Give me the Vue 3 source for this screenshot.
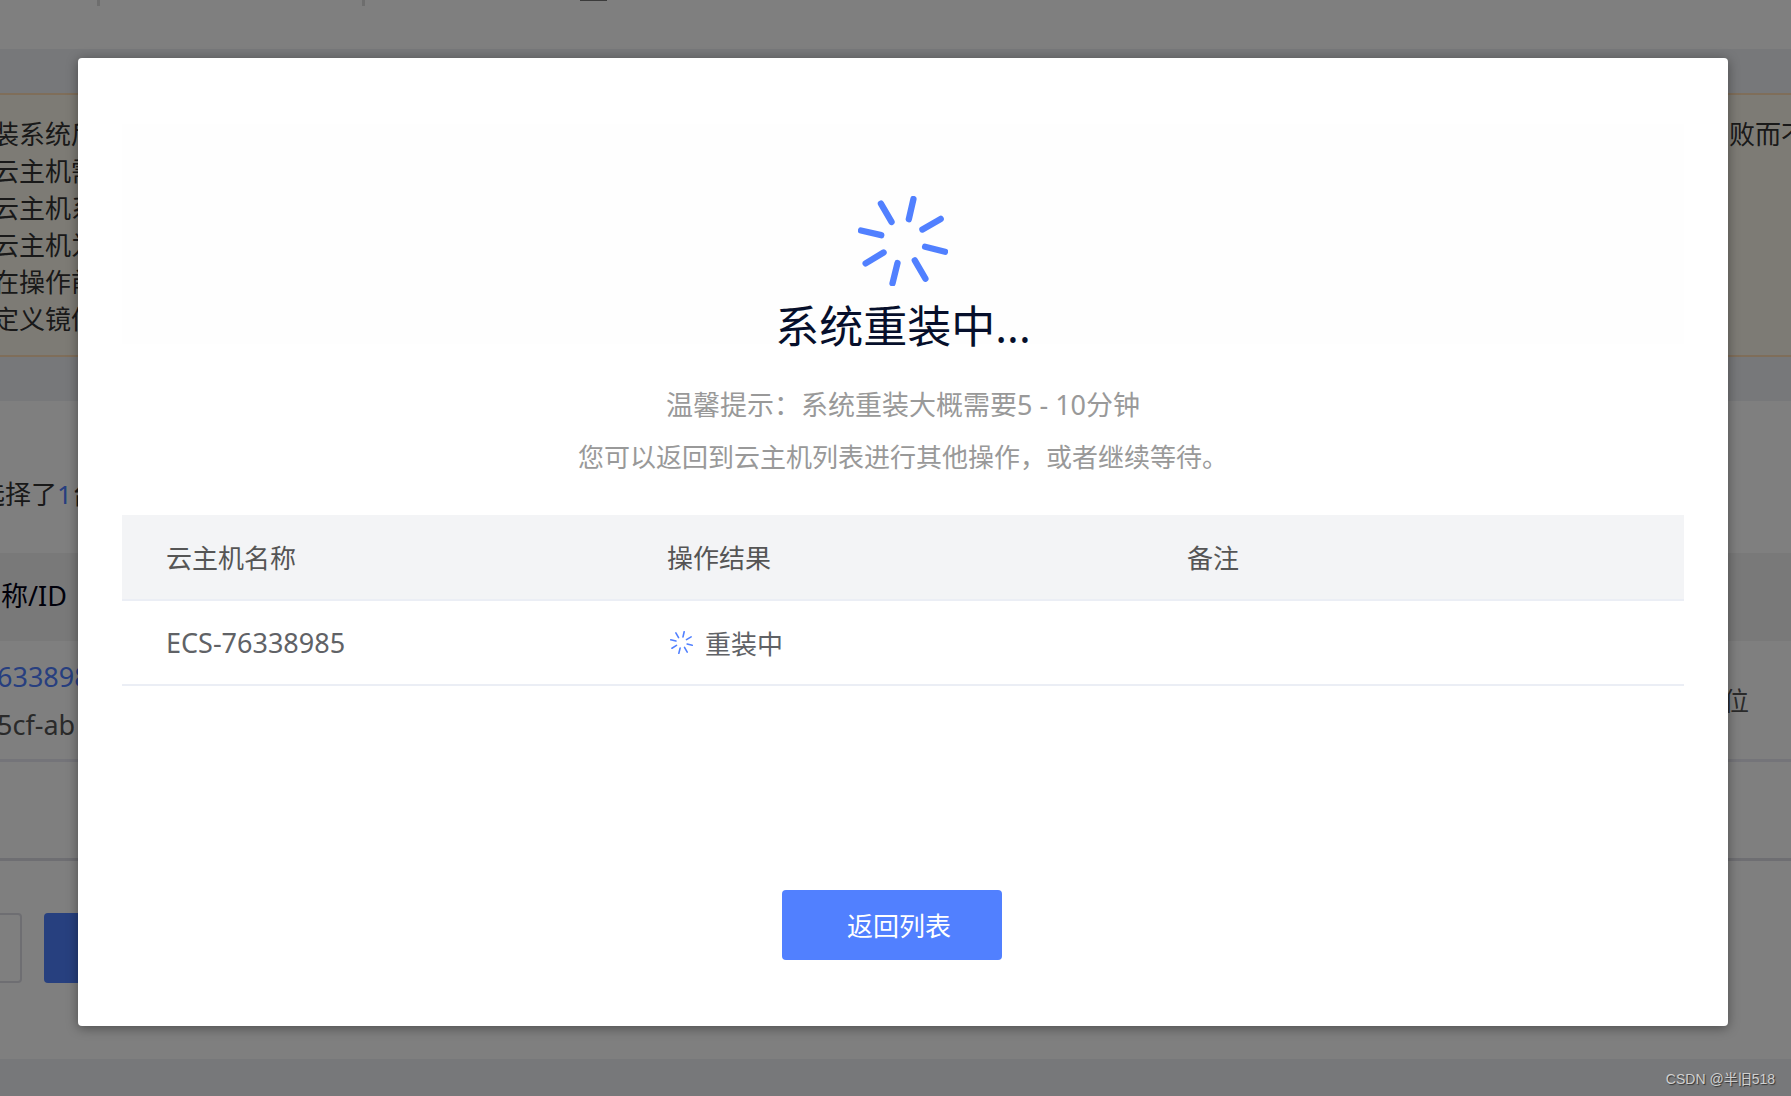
<script setup>
import { h } from 'vue'

const notices = [
  { head: '装系统后' },
  { head: '云主机需' },
  { head: '云主机系' },
  { head: '云主机为' },
  { head: '在操作前' },
  { head: '定义镜像' }
]

const hosts = [{ name: 'ECS-76338985', status: '重装中' }]

const spokes = [
  [520, 87, 506, 148],
  [602, 147, 547, 179],
  [555, 231, 615, 246],
  [524, 272, 556, 327],
  [472, 280, 457, 341],
  [430, 248, 376, 281],
  [423, 196, 362, 182],
  [422, 101, 454, 156]
]

const Spinner = () =>
  h(
    'svg',
    {
      viewBox: '353 78 271 271',
      fill: 'none',
      stroke: 'currentColor',
      'stroke-width': 19,
      'stroke-linecap': 'round',
      'aria-hidden': 'true'
    },
    spokes.map(([x1, y1, x2, y2]) => h('line', { x1, y1, x2, y2 }))
  )
</script>

<template>
  <div class="screen">
    <main class="page">
      <header class="topbar">
        <i class="sep"></i>
        <i class="sep"></i>
        <i class="tab-mark"></i>
      </header>

      <section class="notice">
        <p v-for="(n, i) in notices" :key="i">
          <span>{{ n.head }}</span>
          <span v-if="i === 0">败而不</span>
        </p>
      </section>

      <section class="panel">
        <p class="chosen">选择了<b>1</b>台</p>
        <table class="list">
          <thead>
            <tr>
              <th class="id-head">名称/ID</th>
              <th></th>
            </tr>
          </thead>
          <tbody>
            <tr>
              <td class="id-cell">
                <a href="#">6338985</a>
                <span>5cf-ab</span>
              </td>
              <td class="unit">位</td>
            </tr>
          </tbody>
        </table>
        <div class="blank"></div>
        <div class="actions">
          <button type="button" class="plain" aria-label="上一步"></button>
          <button type="button" class="solid" aria-label="确定"></button>
        </div>
      </section>
    </main>

    <div class="mask">
      <div class="modal" role="dialog" aria-labelledby="modal-title">
        <div class="hero">
          <Spinner class="spin-large" />
          <h1 id="modal-title">系统重装中...</h1>
        </div>
        <div class="tips">
          <p class="lead">温馨提示：系统重装大概需要5 - 10分钟</p>
          <p>您可以返回到云主机列表进行其他操作，或者继续等待。</p>
        </div>
        <table class="result">
          <colgroup>
            <col class="col-name" />
            <col class="col-status" />
            <col />
          </colgroup>
          <thead>
            <tr>
              <th>云主机名称</th>
              <th>操作结果</th>
              <th>备注</th>
            </tr>
          </thead>
          <tbody>
            <tr v-for="host in hosts" :key="host.name">
              <td class="latin">{{ host.name }}</td>
              <td>
                <div class="status"><Spinner class="spin-small" />{{ host.status }}</div>
              </td>
              <td></td>
            </tr>
          </tbody>
        </table>
        <button type="button" class="back">返回列表</button>
      </div>
      <span class="credit">CSDN @半旧518</span>
    </div>
  </div>
</template>

<style>
body {
  margin: 0;
}
</style>

<style scoped>
* {
  box-sizing: border-box;
}
p,
h1 {
  margin: 0;
  font-weight: 400;
}
table {
  width: 100%;
  border-collapse: separate;
  border-spacing: 0;
}
th,
td {
  padding: 0;
  text-align: left;
  font-weight: 400;
}
.screen {
  position: relative;
  height: 100vh;
  overflow: hidden;
  background: #eef0f5;
  font-family: "Noto Sans", "Noto Sans CJK SC", sans-serif;
  font-size: 26px;
  color: #333;
}

/* page behind the dialog */
.topbar {
  display: flex;
  align-items: flex-start;
  height: 49px;
  padding-left: 97px;
  background: #fff;
}
.sep {
  width: 3px;
  height: 6px;
  margin-right: 262px;
  background: #dcdcdc;
}
.tab-mark {
  width: 27px;
  height: 1px;
  margin-left: -47px;
  background: #777;
}
.notice {
  margin-top: 44px;
  height: 264px;
  padding-top: 21px;
  border: solid #ffdcb4;
  border-width: 2px 0;
  background: #fbf7eb;
  line-height: 37px;
}
.notice p {
  display: flex;
  justify-content: space-between;
  margin: 0 -16px 0 -7px;
}
.panel {
  margin-top: 44px;
  height: 658px;
  background: #fff;
}
.chosen {
  margin-left: -21px;
  padding-top: 67px;
  line-height: 52px;
  height: 152px;
}
.chosen b {
  font-weight: 400;
  color: #4f7fff;
}
.list th {
  height: 88px;
  padding-bottom: 5px;
  background: #f3f3f3;
  color: #000014;
  font-size: 27px;
}
.list .id-head {
  text-indent: -26px;
}
.list td {
  height: 121px;
  border-bottom: 3px solid #e9e9f2;
  color: #555;
}
.list .id-cell {
  padding-top: 2px;
  font-size: 27px;
  line-height: 48px;
}
.id-cell a,
.id-cell span {
  display: block;
  margin-left: -3px;
}
.id-cell a {
  color: #4f7fff;
  text-decoration: none;
}
.list .unit {
  width: 68px;
}
.blank {
  height: 99px;
  border-bottom: 3px solid #dcdce4;
}
.actions {
  display: flex;
  gap: 22px;
  margin: 52px 0 0 -198px;
}
.actions button {
  width: 220px;
  height: 70px;
  border-radius: 4px;
}
.plain {
  border: 2px solid #dcdce4;
  background: #fff;
}
.solid {
  border: 0;
  background: #4e80ff;
}

/* dialog */
.mask {
  position: absolute;
  inset: 0;
  padding: 58px 63px 0 78px;
  background: rgba(0, 0, 0, 0.5);
}
.modal {
  display: flex;
  flex-direction: column;
  padding: 66px 44px;
  border-radius: 4px;
  background: #fff;
  box-shadow: 0 2px 12px rgba(0, 0, 0, 0.4);
}
.hero {
  display: flex;
  flex-direction: column;
  align-items: center;
  gap: 10px;
  padding-top: 72px;
  background: linear-gradient(#fefefe, #fefefe) no-repeat 0 0 / 100% 220px;
}
.spin-large {
  width: 90px;
  height: 90px;
  color: #5180ff;
}
h1 {
  font-size: 44px;
  line-height: 60px;
  color: #060f2b;
}
.tips {
  margin-top: 22px;
  text-align: center;
  line-height: 53px;
  color: #999;
}
.lead {
  font-size: 27px;
}
.result {
  margin-top: 31px;
  table-layout: fixed;
}
.col-name {
  width: 501px;
}
.col-status {
  width: 520px;
}
.result th,
.result td {
  height: 86px;
  padding-left: 44px;
  border-bottom: 2px solid #ebeef5;
  color: #555;
}
.result th {
  background: #f3f4f6;
}
.result td {
  height: 85px;
  color: #606266;
}
.result .latin {
  font-size: 27px;
}
.status {
  display: flex;
  align-items: center;
  gap: 12px;
  padding-left: 3px;
}
.spin-small {
  width: 23px;
  height: 23px;
  color: #5180ff;
}
.back {
  align-self: center;
  width: 220px;
  height: 70px;
  margin: 204px 22px 0 0;
  padding: 0 0 0 14px;
  border: 0;
  border-radius: 4px;
  background: #5180ff;
  color: #fff;
  font: inherit;
}
.credit {
  position: absolute;
  right: 16px;
  bottom: 7px;
  font: 14px/20px "Liberation Sans", "Noto Sans CJK SC", sans-serif;
  color: #d0d0d0;
  text-shadow: 1px 1px 1px #333;
}
</style>
